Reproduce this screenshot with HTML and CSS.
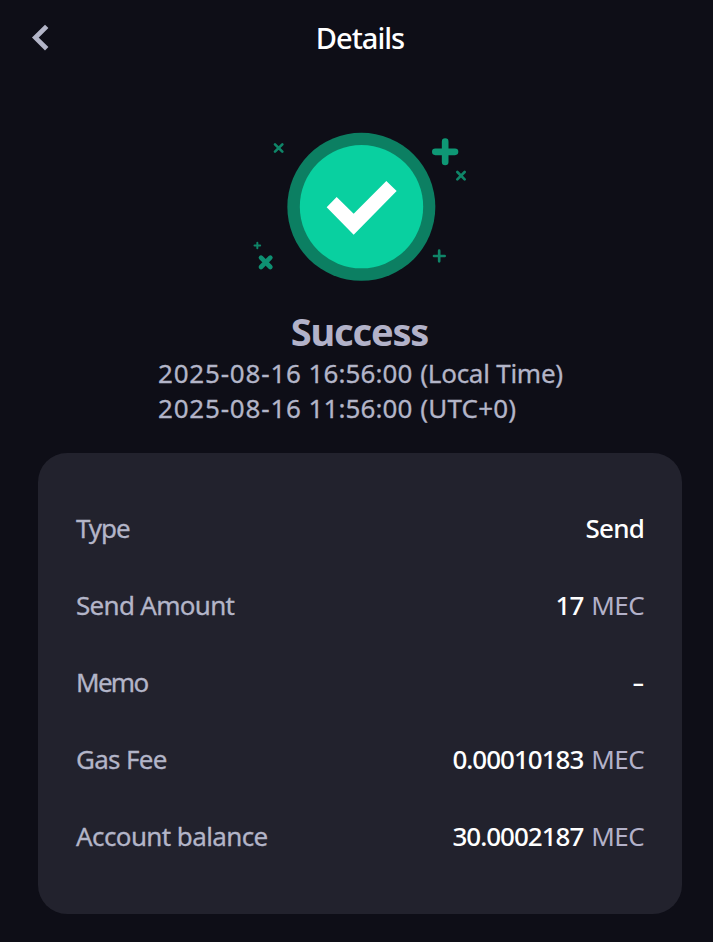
FILE: index.html
```html
<!DOCTYPE html>
<html lang="en">
<head>
<meta charset="utf-8">
<title>Details</title>
<link rel="stylesheet" href="styles.css">
</head>
<body>
<header class="bar">
  <svg class="back" viewBox="0 0 24 32" fill="none" stroke="#b3b5c8" stroke-width="4.8"><path d="M18.700 4.400 7.400 15.600 18.700 26.800"/></svg>
  <h1 class="title">Details</h1>
</header>
<main>
  <svg class="badge" viewBox="0 0 720 540">
    <circle cx="364" cy="260.500" r="222" fill="#0c7f62"/>
    <circle cx="364.500" cy="260" r="185" fill="#09d0a0"/>
    <path d="M260 262 290 231 341 281 439 183 470 213 341 344Z" fill="#fff"/>
    <g stroke="#0f8568" stroke-linecap="round" fill="none">
      <path stroke="#0e9875" stroke-width="20" d="M615.500 65V126M586 95.500H645"/>
      <path stroke-width="8" d="M105 73 127 95M127 73 105 95M652 156 674 178M674 156 652 178"/>
      <path stroke-width="8" d="M597.500 392V424M582 408H614"/>
      <path stroke-width="6" d="M52 368V385M43.500 376.500H60.500"/>
      <path stroke="#0e9072" stroke-width="14" d="M63 413 91 441M91 413 63 441"/>
    </g>
  </svg>
  <h2 class="status">Success</h2>
  <div class="times">
    <p><span class="date">2025-08-16</span> <span class="clock">16:56:00</span> <span class="local">(Local Time)</span></p>
    <p><span class="date">2025-08-16</span> <span class="clock">11:56:00</span> <span class="utc">(UTC+0)</span></p>
  </div>
  <dl class="card">
    <div class="row"><dt class="type">Type</dt><dd class="send">Send</dd></div>
    <div class="row"><dt>Send Amount</dt><dd><span class="num">17</span><span class="unit">MEC</span></dd></div>
    <div class="row"><dt class="memo">Memo</dt><dd class="dash">-</dd></div>
    <div class="row"><dt>Gas Fee</dt><dd><span class="num">0.00010183</span><span class="unit">MEC</span></dd></div>
    <div class="row"><dt class="balance">Account balance</dt><dd><span class="num">30.0002187</span><span class="unit">MEC</span></dd></div>
  </dl>
</main>
</body>
</html>
```
FILE: styles.css
```css
* { box-sizing: border-box; margin: 0; padding: 0; }
body {
  min-height: 942px;
  background: #0e0e17;
  color: #b3b5c8;
  font-family: "Noto Sans", sans-serif;
  font-size: 26px;
  overflow: hidden;
}
.bar {
  display: grid;
  grid-template-columns: 60px 1fr 60px;
  align-items: center;
  height: 76px;
  padding: 0 0 0 8px;
}
.back { width: 24px; height: 32px; margin-left: 20px; }
.title {
  padding: 0 1px 2px 0;
  text-align: center;
  font-size: 29px;
  font-weight: 500;
  color: #fff;
  letter-spacing: -1px;
}
.badge { display: block; width: 240px; height: 180px; margin: 44px 0 0 240px; }
.status {
  margin: 5px 0 0 6px;
  height: 52px;
  line-height: 52px;
  text-align: center;
  font-size: 38px;
  font-weight: 700;
  letter-spacing: -1.2px;
  color: #b2b2c9;
}
.times {
  margin: -1px 0 0 158px;
  line-height: 35px;
  white-space: nowrap;
  -webkit-text-stroke: 0.3px currentColor;
}
.date { letter-spacing: 0.8px; }
.clock { letter-spacing: 0.1px; }
.local { margin-left: 1px; letter-spacing: -0.25px; }
.utc { margin-left: 1px; letter-spacing: 0.2px; }
.card {
  margin: 27px 31px 0 38px;
  height: 461px;
  padding: 36px 38px 40px;
  border-radius: 29px;
  background: #22222d;
}
.row { display: flex; justify-content: space-between; align-items: center; height: 77px; }
dt { letter-spacing: -0.7px; -webkit-text-stroke: 0.3px currentColor; }
.type { letter-spacing: -1.1px; }
.memo { letter-spacing: -1.7px; }
.balance { letter-spacing: -0.6px; }
dd { display: flex; gap: 8px; color: #fff; font-weight: 500; }
.send { letter-spacing: -0.8px; }
.num { letter-spacing: -1px; }
.dash { transform: scaleX(1.45); transform-origin: right; }
.unit { color: #b3b1c8; font-weight: 400; letter-spacing: -0.6px; }
```
